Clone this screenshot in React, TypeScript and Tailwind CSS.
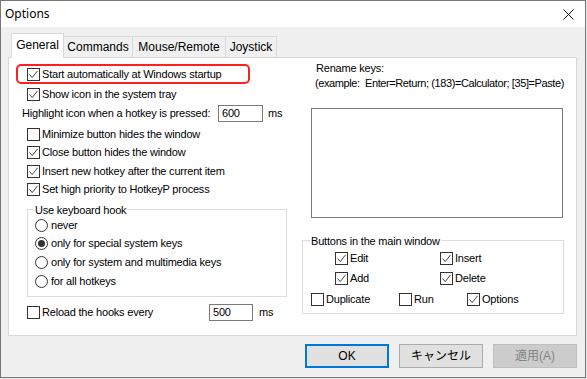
import React from 'react'

type Opt = { label: string; checked?: boolean }

function Check({ checked }: { checked?: boolean }) {
  return (
    <span className="w-[13px] h-[13px] border border-[#333333] bg-white flex items-center justify-center shrink-0">
      {checked && (
        <svg width="11" height="11" viewBox="0 0 11 11">
          <path d="M1.5 5.5 L4.2 8.6 L9.6 1.8" stroke="#444444" strokeWidth="1" fill="none" />
        </svg>
      )}
    </span>
  )
}

function Radio({ checked }: { checked?: boolean }) {
  return (
    <span className="w-[13px] h-[13px] rounded-full border border-[#333333] bg-white flex items-center justify-center shrink-0">
      {checked && <span className="w-[7px] h-[7px] rounded-full bg-[#333333]" />}
    </span>
  )
}

function CheckRow({ label, checked, className = '' }: Opt & { className?: string }) {
  return (
    <div className={`flex items-center h-[18px] gap-[2px] ${className}`}>
      <Check checked={checked} />
      <span className="whitespace-nowrap">{label}</span>
    </div>
  )
}

function RadioRow({ label, checked, className = '' }: Opt & { className?: string }) {
  return (
    <div className={`flex items-center h-[18px] gap-[3px] ${className}`}>
      <Radio checked={checked} />
      <span className="whitespace-nowrap">{label}</span>
    </div>
  )
}

const tabs = [
  { name: 'Commands', w: 'w-[69px]' },
  { name: 'Mouse/Remote', w: 'w-[93px]' },
  { name: 'Joystick', w: 'w-[51px]' }
]

export default function App() {
  return (
    <div className="w-[587px] h-[379px] bg-[#e8e8e8]">
      <div className="w-[586px] h-[378px] border border-[#777777] bg-[#f0f0f0] flex flex-col text-black font-['Liberation_Sans',sans-serif] text-[11px] tracking-[-0.2px]">
        {/* title bar */}
        <div className="h-[26px] bg-white flex items-center justify-between pl-[4px] pr-[11px] shrink-0">
          <span className="font-['Noto_Sans',sans-serif] text-[12px] tracking-normal">Options</span>
          <svg width="11" height="11" viewBox="0 0 11 11">
            <path d="M0.5 0.5 L10.5 10.5 M10.5 0.5 L0.5 10.5" stroke="#111" strokeWidth="1" />
          </svg>
        </div>

        {/* tabs */}
        <div className="mt-[6px] h-[24px] flex items-end pl-[10px] font-['Liberation_Sans',sans-serif] text-[12px] tracking-normal shrink-0">
          <div className="relative z-10 w-[53px] h-[25px] mb-[-1px] bg-white border border-b-0 border-[#d9d9d9] flex items-center justify-center pb-[2px]">
            General
          </div>
          {tabs.map(t => (
            <div key={t.name} className={`${t.w} h-[21px] border-t border-r border-[#d9d9d9] bg-[#f0f0f0] flex items-center justify-center`}>
              {t.name}
            </div>
          ))}
        </div>

        {/* panel */}
        <div className="ml-[7px] w-[569px] h-[279px] border border-[#d9d9d9] bg-white flex shrink-0">
          {/* left column */}
          <div className="w-[293px] flex flex-col">
            <div className="mt-[6px] ml-[7px] w-[234px] h-[20px] border-2 border-[#ff1f1f] rounded-[5px] flex items-center pl-[9px] gap-[2px]">
              <Check checked />
              <span className="whitespace-nowrap">Start automatically at Windows startup</span>
            </div>
            <CheckRow className="mt-[1px] ml-[18px]" label="Show icon in the system tray" checked />
            <div className="mt-[1px] ml-[13px] h-[18px] flex items-center">
              <span className="w-[196px] whitespace-nowrap">Highlight icon when a hotkey is pressed:</span>
              <span className="w-[45px] h-[17px] border border-[#7a7a7a] flex items-center pl-[3px]">600</span>
              <span className="ml-[5px]">ms</span>
            </div>
            <CheckRow className="mt-[3px] ml-[18px]" label="Minimize button hides the window" />
            <CheckRow className="ml-[18px]" label="Close button hides the window" checked />
            <CheckRow className="mt-[1px] ml-[18px]" label="Insert new hotkey after the current item" checked />
            <CheckRow className="ml-[18px]" label="Set high priority to HotkeyP process" checked />

            <div className="relative mt-[11px] ml-[18px] w-[260px] h-[88px] border border-[#dcdcdc] flex flex-col pl-[7px] pt-[6px]">
              <span className="absolute -top-[8px] left-[6px] bg-white px-[1px] whitespace-nowrap">Use keyboard hook</span>
              <RadioRow label="never" />
              <RadioRow label="only for special system keys" checked />
              <RadioRow className="mt-[1px]" label="only for system and multimedia keys" />
              <RadioRow className="mt-[1px]" label="for all hotkeys" />
            </div>

            <div className="mt-[6px] ml-[18px] h-[18px] flex items-center">
              <div className="w-[182px] flex items-center gap-[2px]">
                <Check />
                <span className="whitespace-nowrap">Reload the hooks every</span>
              </div>
              <span className="w-[44px] h-[17px] border border-[#7a7a7a] flex items-center pl-[3px]">500</span>
              <span className="ml-[6px]">ms</span>
            </div>
          </div>

          {/* right column */}
          <div className="flex-1 flex flex-col">
            <div className="mt-[3px] pl-[14px] h-[14px] flex items-center whitespace-nowrap">Rename keys:</div>
            <div className="mt-[1px] pl-[13px] h-[14px] flex items-center whitespace-nowrap tracking-[-0.4px]">
              (example:&nbsp; Enter=Return; (183)=Calculator; [35]=Paste)
            </div>
            <div className="mt-[18px] ml-[9px] w-[252px] h-[110px] border border-[#7a7a7a] bg-white" />

            <div className="relative mt-[22px] w-[262px] h-[74px] border border-[#dcdcdc] flex flex-col pt-[8px]">
              <span className="absolute -top-[8px] left-[7px] bg-white px-[1px] whitespace-nowrap">Buttons in the main window</span>
              <div className="flex pl-[32px]">
                <CheckRow className="w-[105px]" label="Edit" checked />
                <CheckRow label="Insert" checked />
              </div>
              <div className="flex pl-[32px] mt-[2px]">
                <CheckRow className="w-[105px]" label="Add" checked />
                <CheckRow label="Delete" checked />
              </div>
              <div className="flex pl-[8px] mt-[3px]">
                <CheckRow className="w-[88px]" label="Duplicate" />
                <CheckRow className="w-[68px]" label="Run" />
                <CheckRow label="Options" checked />
              </div>
            </div>
          </div>
        </div>

        {/* dialog buttons */}
        <div className="mt-[8px] flex justify-end gap-[10px] pr-[8px] font-['Liberation_Sans','Noto_Sans_CJK_JP',sans-serif] text-[12px] tracking-normal">
          <div className="w-[84px] h-[24px] bg-[#e1e1e1] border-2 border-[#0078d7] flex items-center justify-center">OK</div>
          <div className="w-[84px] h-[24px] bg-[#e1e1e1] border border-[#adadad] flex items-center justify-center">キャンセル</div>
          <div className="w-[84px] h-[24px] bg-[#cccccc] border border-[#bfbfbf] flex items-center justify-center text-[#838383]">適用(A)</div>
        </div>
      </div>
    </div>
  )
}
